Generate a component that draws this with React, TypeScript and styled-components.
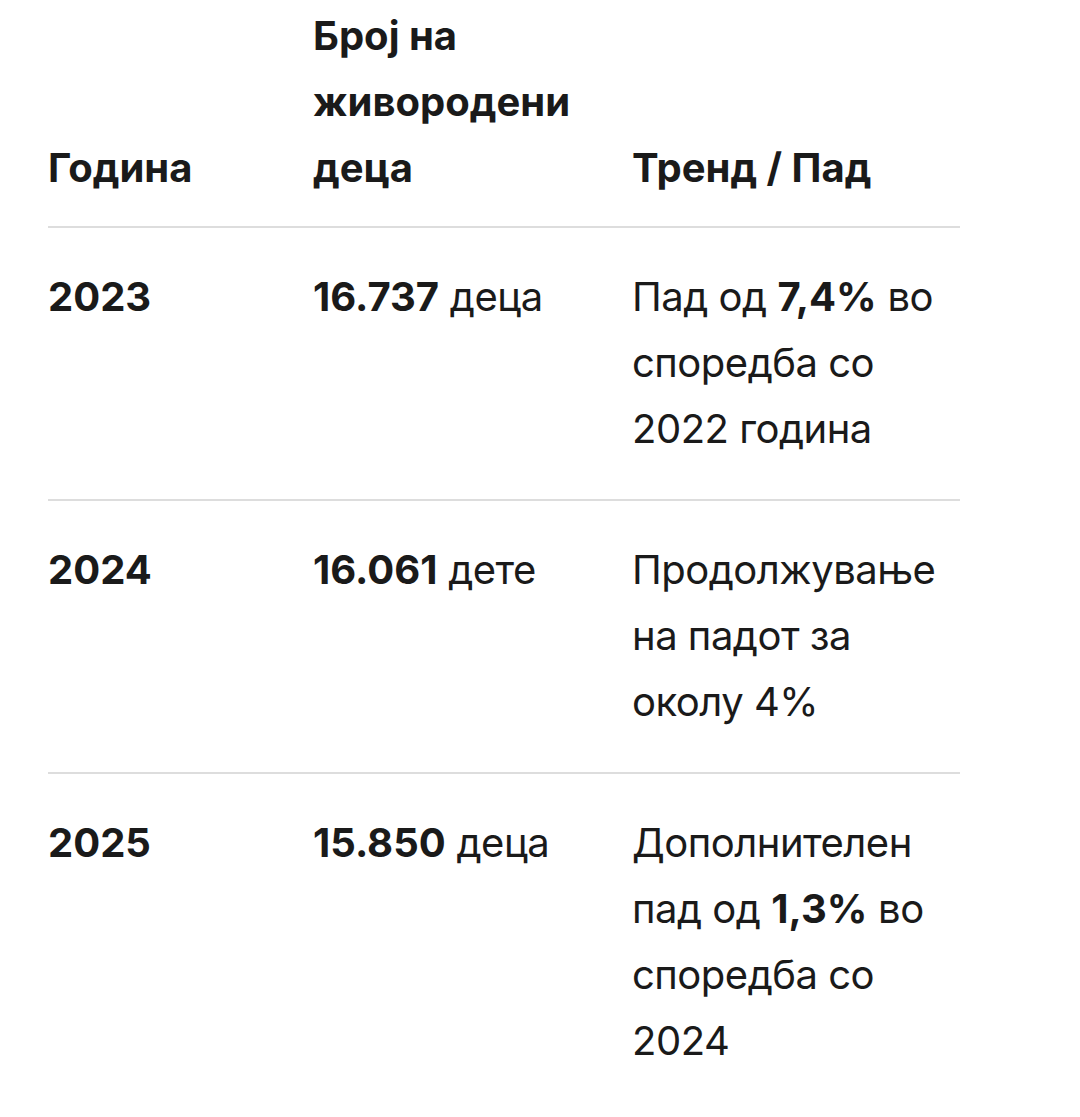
import React from "react";
import styled, { createGlobalStyle } from "styled-components";

const Global = createGlobalStyle`
  html, body { margin: 0; padding: 0; background: #ffffff; }
  body { font-family: Inter, "Noto Sans", sans-serif; color: #1a1a1a; }
`;

const Page = styled.div`
  padding: 3px 120px 0 48px;
`;

const Table = styled.table`
  width: 912px;
  border-collapse: collapse;
  table-layout: fixed;
  font-size: 40px;
  line-height: 66px;
  letter-spacing: -0.5px;
`;

const Col = styled.col<{ $w: number }>`
  width: ${(p) => p.$w}px;
`;

const HeadCell = styled.th`
  text-align: left;
  vertical-align: bottom;
  font-weight: 700;
  letter-spacing: 0;
  padding: 0 16px 25px 0;
`;

const Row = styled.tr`
  border-top: 2px solid #dddddd;
`;

const Cell = styled.td<{ $strong?: boolean }>`
  vertical-align: top;
  padding: 36px 16px 37px 0;
  font-weight: ${(p) => (p.$strong ? 700 : 400)};
  letter-spacing: ${(p) => (p.$strong ? "0" : "-0.5px")};
`;

const LastCell = styled(Cell)`
  padding-right: 0;
`;

const B = styled.strong`
  font-weight: 700;
  letter-spacing: 0;
`;

const rows = [
  {
    year: "2023",
    num: "16.737",
    unit: "деца",
    trend: (
      <>
        Пад од <B>7,4%</B> во споредба со 2022 година
      </>
    ),
  },
  {
    year: "2024",
    num: "16.061",
    unit: "дете",
    trend: <>Продолжување на падот за околу 4%</>,
  },
  {
    year: "2025",
    num: "15.850",
    unit: "деца",
    trend: (
      <>
        Дополнителен пад од <B>1,3%</B> во споредба со 2024
      </>
    ),
  },
];

export default function App() {
  return (
    <>
      <Global />
      <Page>
        <Table>
          <colgroup>
            <Col $w={265} />
            <Col $w={319} />
            <Col $w={328} />
          </colgroup>
          <thead>
            <tr>
              <HeadCell>Година</HeadCell>
              <HeadCell>Број на живородени деца</HeadCell>
              <HeadCell>Тренд / Пад</HeadCell>
            </tr>
          </thead>
          <tbody>
            {rows.map((r) => (
              <Row key={r.year}>
                <Cell $strong>{r.year}</Cell>
                <Cell>
                  <B>{r.num}</B> {r.unit}
                </Cell>
                <LastCell>{r.trend}</LastCell>
              </Row>
            ))}
          </tbody>
        </Table>
      </Page>
    </>
  );
}
